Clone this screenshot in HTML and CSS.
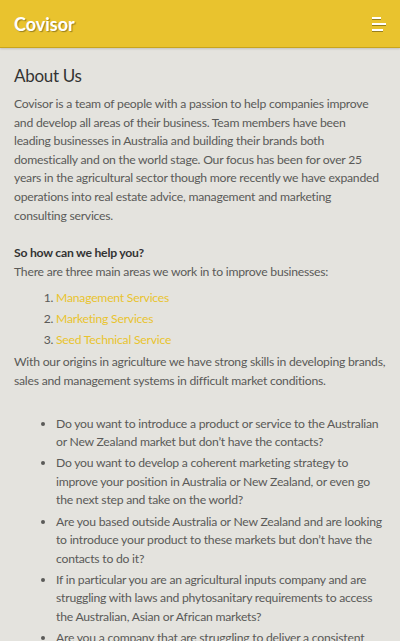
FILE: index.html
```html
<!DOCTYPE html>
<html>
<head>
<meta charset="utf-8">
<link rel="stylesheet" href="styles.css">
</head>
<body>
<header class="topbar">
  <div class="brand">Covisor</div>
  <div class="menu-btn" aria-label="menu">
    <span class="bar bar-1"></span>
    <span class="bar bar-2"></span>
    <span class="bar bar-3"></span>
  </div>
</header>
<main class="content">
  <h1 class="title">About Us</h1>
  <p class="para">Covisor is a team of people with a passion to help companies improve and develop all areas of their business. Team members have been leading&nbsp;businesses in Australia and building their brands both domestically and on the world stage. Our focus has been for over 25 years in the agricultural sector though more recently we have expanded operations into real estate advice, management and marketing consulting services.</p>
  <p class="para para-help"><strong>So how can we help you?</strong><br>There are three main areas we work in to improve businesses:</p>
  <ol class="services">
    <li><a href="#">Management Services</a></li>
    <li><a href="#">Marketing Services</a></li>
    <li><a href="#">Seed Technical Service</a></li>
  </ol>
  <p class="para">With our origins in agriculture we have strong skills in developing brands, sales and management systems in difficult market conditions.</p>
  <ul class="questions">
    <li>Do you want to introduce a product or service to the Australian or New Zealand market but don’t have the contacts?</li>
    <li>Do you want to develop a coherent marketing strategy to improve your position in Australia or New Zealand, or even go the next step and take on the world?</li>
    <li>Are you based outside Australia or New Zealand and are looking to introduce your product to these markets but don’t have the contacts to do it?</li>
    <li>If in particular you are an agricultural inputs company and are struggling with laws and phytosanitary requirements to access the Australian, Asian or African markets?</li>
    <li>Are you a company that are struggling to deliver a consistent message to your customers?</li>
  </ul>
</main>
</body>
</html>
```
FILE: styles.css
```css
html, body {
  margin: 0;
  padding: 0;
}
body {
  background: #e4e3de;
  font-family: "Lato", "Open Sans", sans-serif;
  color: #5a5a58;
  font-size: 12.2px;
  letter-spacing: -0.23px;
  line-height: 18.6px;
  overflow: hidden;
}
.topbar {
  height: 47px;
  background: #e9c32e;
  border-bottom: 1px solid #c9a51c;
  box-shadow: 0 1px 2px rgba(0,0,0,0.15);
  display: flex;
  align-items: center;
  justify-content: space-between;
  padding: 0 14px;
  box-sizing: content-box;
  letter-spacing: 0;
}
.brand {
  color: #fff;
  font-weight: 700;
  font-size: 18px;
  text-shadow: 1px 1px 1px rgba(0,0,0,0.35);
  padding-top: 2px;
}
.menu-btn {
  width: 14px;
  display: flex;
  flex-direction: column;
  gap: 4px;
  margin-right: 0;
}
.bar {
  display: block;
  height: 2px;
  background: #fff;
  box-shadow: 0 1px 0 rgba(0,0,0,0.35);
}
.bar-1 { width: 9px; }
.bar-2 { width: 14px; }
.bar-3 { width: 11px; }
.content {
  padding: 16px 14px 0 14px;
}
.title {
  margin: 0 0 7px 0;
  font-weight: 400;
  font-size: 17px;
  line-height: 24px;
  letter-spacing: -0.3px;
  color: #333;
}
.para {
  margin: 0 0 19px 0;
}
.para-help {
  margin-bottom: 6px;
}
.para-help strong {
  color: #333;
}
.services {
  margin: 0 0 3px 0;
  padding-left: 42px;
}
.services li {
  line-height: 21px;
  padding-left: 0;
}
.services a {
  color: #e9c32e;
  text-decoration: none;
}
.questions {
  margin: 24px 0 0 0;
  padding-left: 42px;
}
.questions li {
  margin-bottom: 2.5px;
}
```
